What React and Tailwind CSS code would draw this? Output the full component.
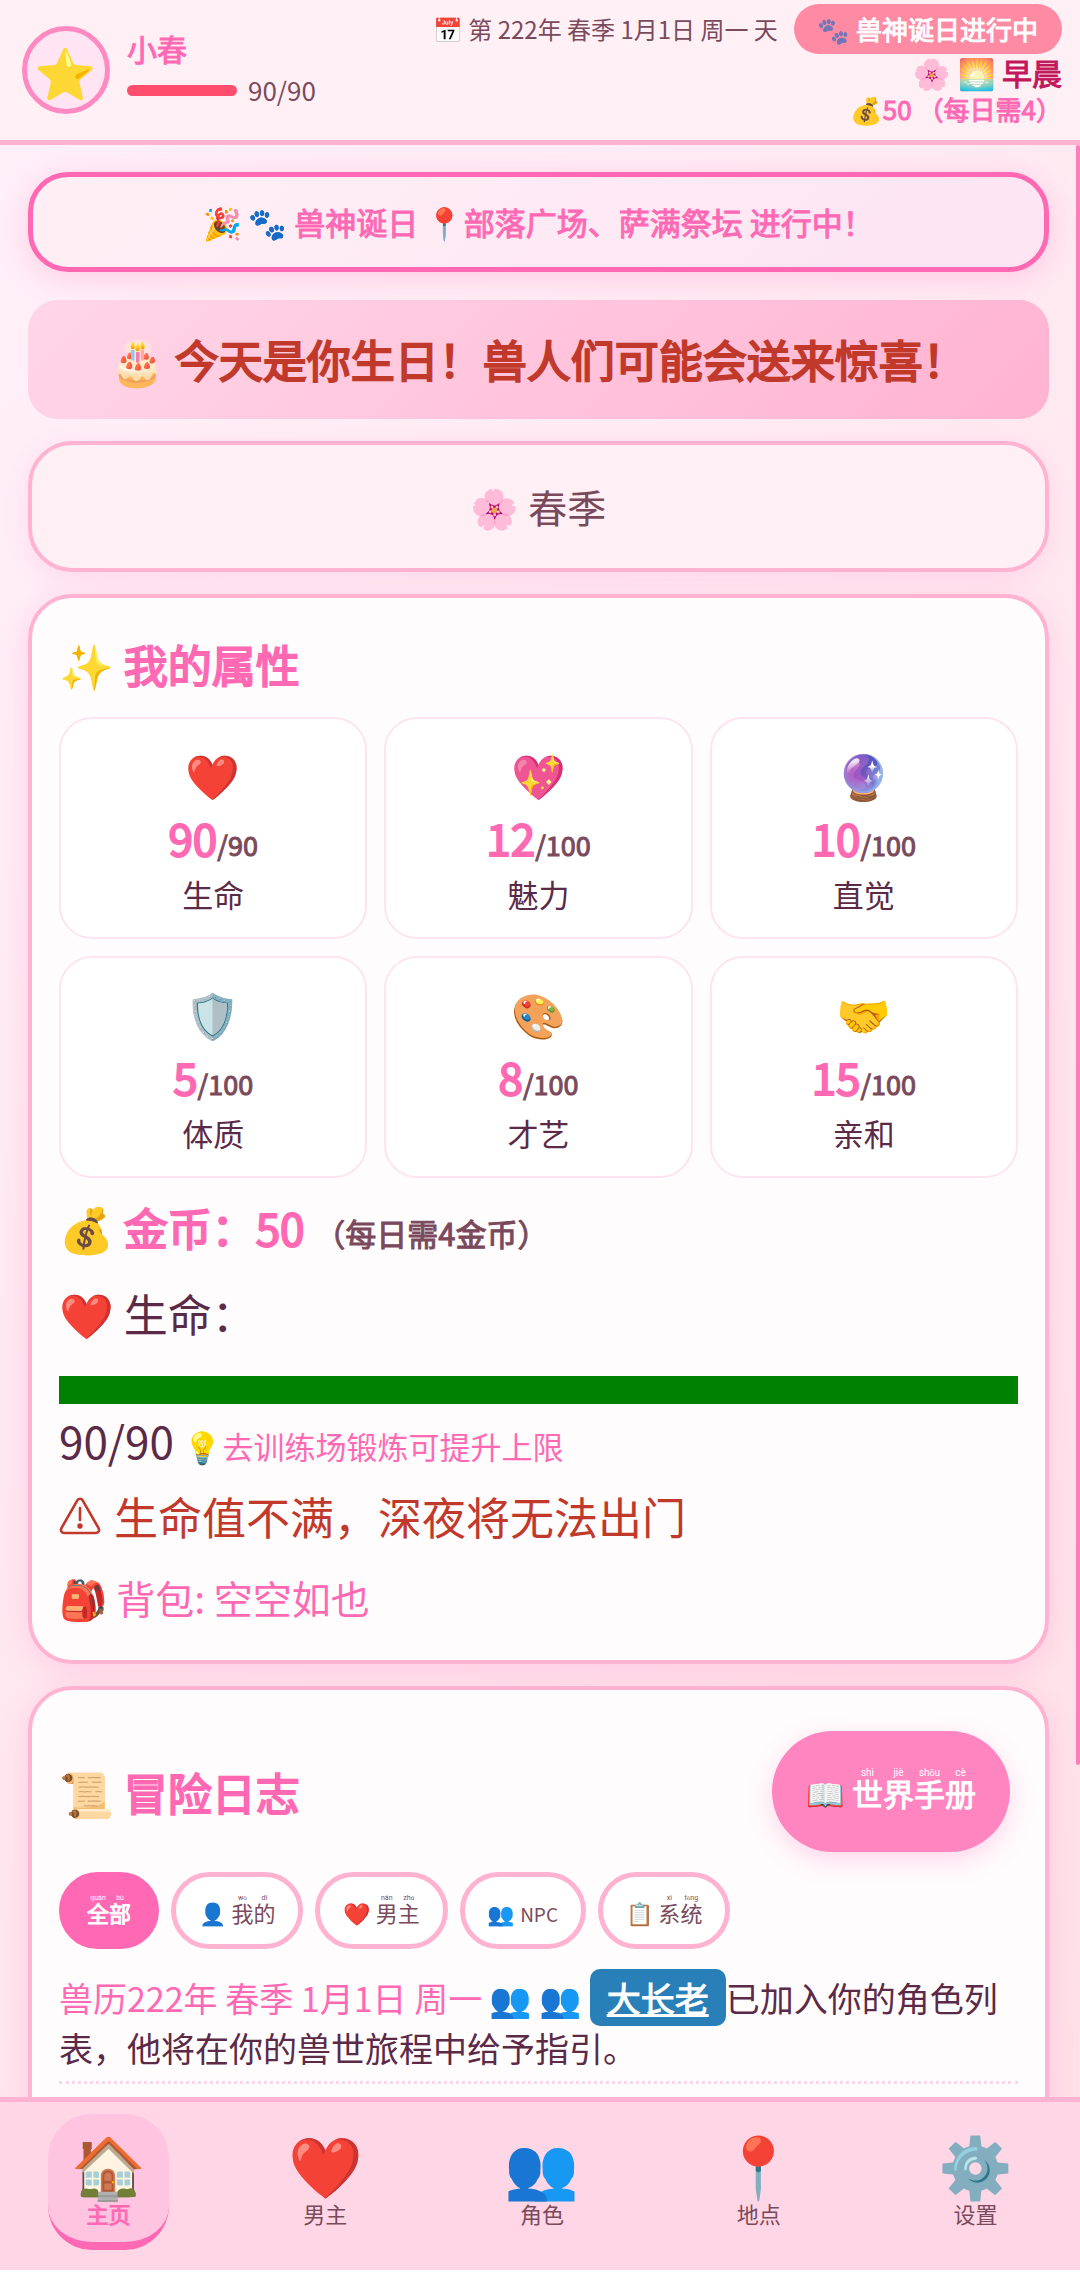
import { Fragment } from 'react';

const stats = [
  { icon: '❤️', value: 90, max: 90, label: '生命' },
  { icon: '💖', value: 12, max: 100, label: '魅力' },
  { icon: '🔮', value: 10, max: 100, label: '直觉' },
  { icon: '🛡️', value: 5, max: 100, label: '体质' },
  { icon: '🎨', value: 8, max: 100, label: '才艺' },
  { icon: '🤝', value: 15, max: 100, label: '亲和' },
];

const filters = [
  { chars: [['全', 'quán'], ['部', 'bù']], active: true },
  { icon: '👤', chars: [['我', 'wǒ'], ['的', 'dí']] },
  { icon: '❤️', chars: [['男', 'nán'], ['主', 'zhǔ']] },
  { icon: '👥', text: 'NPC' },
  { icon: '📋', chars: [['系', 'xì'], ['统', 'tǒng']] },
];

const tabs = [
  { icon: '🏠', label: '主页', active: true },
  { icon: '❤️', label: '男主' },
  { icon: '👥', label: '角色' },
  { icon: '📍', label: '地点' },
  { icon: '⚙️', label: '设置' },
];

// Characters with their pinyin set above them.
function Pinyin({ chars, small }) {
  return (
    <ruby>
      {chars.map(([c, p]) => (
        <Fragment key={c}>
          {c}
          <rt
            className={
              small
                ? "font-['Roboto'] text-[7px] leading-none [-webkit-text-stroke:0]"
                : "font-['Roboto'] text-[10px] leading-none [-webkit-text-stroke:0]"
            }
          >
            {p}
          </rt>
        </Fragment>
      ))}
    </ruby>
  );
}

function Header() {
  return (
    <header className="flex shrink-0 items-start justify-between border-b-[5px] border-[#ffb3d1] bg-[#fff0f5] px-[18px] pt-1 pb-3 pl-[22px]">
      <div className="flex items-center gap-[17px] pt-[22px]">
        <div className="flex size-[88px] items-center justify-center rounded-full border-[5px] border-[#ff8ac2] bg-[#ffe4f3] text-[50px] leading-none">⭐</div>
        <div className="flex flex-col pb-1">
          <span className="text-[30px] leading-[44px] text-[#ff69b4] [-webkit-text-stroke:1px]">小春</span>
          <div className="flex items-center gap-[11px]">
            <div className="h-[11px] w-[110px] rounded-full bg-[#ff4d6d]" />
            <span className="text-[26px] leading-[40px] text-[#7a4a5c]">90/90</span>
          </div>
        </div>
      </div>
      <div className="flex flex-col items-end whitespace-nowrap">
        <div className="flex items-center gap-4">
          <span className="text-[24px] text-[#7a4a5c]">📅 第 222年 春季 1月1日 周一 天</span>
          <span className="rounded-[25px] bg-[#ff8aa3] px-6 text-[26px] leading-[50px] text-white [-webkit-text-stroke:1px]"><span className="opacity-60">🐾</span> 兽神诞日进行中</span>
        </div>
        <span className="text-[30px] leading-[36px] text-[#c2185b] [-webkit-text-stroke:1px]">🌸 🌅 早晨</span>
        <span className="text-[26px] leading-[38px] text-[#ff69b4] [-webkit-text-stroke:1px]">💰50 （每日需4）</span>
      </div>
    </header>
  );
}

export default function App() {
  return (
    <div className="flex h-screen flex-col overflow-hidden bg-white pb-[10px] font-['Noto_Sans_CJK_SC','Noto_Color_Emoji',sans-serif] text-[#5a2a47]">
      <Header />
      <div className="relative min-h-0 flex-1">
        <main className="flex h-full flex-col overflow-y-auto bg-linear-135 from-[#fff0f8] via-[#ffe8f0] to-[#ffe0e8] py-[27px] pr-[31px] pl-7 [scrollbar-width:none]">
          <section className="mb-7 shrink-0 rounded-[40px] border-[5px] border-[#ff69b4] bg-linear-135 from-[#fff0f5] to-[#fde4f3] py-[22px] text-center text-[31px] leading-[46px] text-[#ff69b4] shadow-[0_6px_30px_rgba(255,105,180,0.25)] [-webkit-text-stroke:1px]">
            🎉 🐾 兽神诞日 📍部落广场、萨满祭坛 进行中！
          </section>
          <section className="mb-[22px] shrink-0 rounded-[30px] bg-linear-135 from-[#ffd6e7] to-[#ffb3d1] py-7 text-center text-[44px] leading-[63px] text-[#c0392b] [-webkit-text-stroke:2px]">
            🎂 今天是你生日！兽人们可能会送来惊喜！
          </section>
          <section className="mb-[22px] shrink-0 rounded-[44px] border-4 border-[#ffb3d1] bg-[#fff0f5] py-8 text-center text-[39px] leading-[59px] text-[#7a4a5c] shadow-[0_6px_24px_rgba(255,105,180,0.15)]">
            🌸 春季
          </section>

          <section className="mb-[22px] shrink-0 rounded-[44px] border-4 border-[#ffb3d1] bg-[#fffcfd] px-[27px] pt-[33px] pb-[33px] text-[44px] shadow-[0_6px_30px_rgba(255,105,180,0.2)]">
            <h2 className="mb-[20px] leading-[66px] text-[#ff69b4] [-webkit-text-stroke:2px]">✨ 我的属性</h2>
            <div className="grid grid-cols-3 gap-[17px]">
              {stats.map((s) => (
                <div key={s.label} className="flex flex-col items-center rounded-[33px] border-2 border-[#fde4f0] bg-white pt-[22px] pb-5">
                  <span className="leading-[66px]">{s.icon}</span>
                  <span className="leading-[60px] text-[#ff69b4] [-webkit-text-stroke:2px]">{s.value}<span className="text-[27px] leading-none text-[#7a4a5c] [-webkit-text-stroke:1px]">/{s.max}</span></span>
                  <span className="mt-1 text-[31px] leading-[46px]">{s.label}</span>
                </div>
              ))}
            </div>
            <p className="mt-4 leading-[66px] text-[#ff69b4] [-webkit-text-stroke:2px]">💰 金币：50 <span className="text-[31px] leading-none text-[#7a4a5c] [-webkit-text-stroke:1px]">（每日需4金币）</span></p>
            <div className="mt-[20px] leading-[66px]">❤️ 生命：</div>
            <div className="mt-[30px] h-7 bg-[#008000]" />
            <p className="mt-[3px] leading-[66px]">90/90 <span className="text-[31px] leading-none text-[#ff69b4]">💡去训练场锻炼可提升上限</span></p>
            <p className="mt-[10px] flex items-center gap-[13px] leading-[66px] text-[#c0392b]">
              <svg className="h-[38px] w-[42px]" viewBox="0 0 42 38" fill="none" stroke="currentColor" strokeWidth="2.6" strokeLinejoin="round" strokeLinecap="round" role="img" aria-label="警告">
                <path d="M18.2 3.6 2.4 31.2C1.2 33.8 2.6 36 5.4 36h31.2c2.8 0 4.2-2.2 3-4.8L23.8 3.6c-1.4-2.4-4.2-2.4-5.6 0Z" />
                <path d="M21 11v12" />
                <circle cx="21" cy="29" r="1.4" fill="currentColor" />
              </svg>
              生命值不满，深夜将无法出门
            </p>
            <p className="mt-[18px] text-[39px] leading-[60px] text-[#ff69b4]">🎒 背包: 空空如也</p>
          </section>

          <section className="shrink-0 rounded-[44px] border-4 border-[#ffb3d1] bg-[#fffcfd] px-[27px] pt-[41px] pb-24 shadow-[0_6px_30px_rgba(255,105,180,0.2)]">
            <div className="flex items-center justify-between pr-2">
              <h2 className="text-[44px] leading-[66px] text-[#ff69b4] [-webkit-text-stroke:2px]">📜 冒险日志</h2>
              <button className="h-[121px] rounded-full bg-[#ff85c0] px-[34px] pt-1 text-[31px] text-white shadow-[0_8px_24px_rgba(255,105,180,0.25)] [-webkit-text-stroke:1px]">
                📖 <Pinyin chars={[['世', 'shì'], ['界', 'jiè'], ['手', 'shǒu'], ['册', 'cè']]} />
              </button>
            </div>
            <div className="mt-[20px] flex gap-3">
              {filters.map((f, i) => (
                <button
                  key={i}
                  className={
                    f.active
                      ? 'h-[77px] rounded-full border-[5px] border-[#ff69b4] bg-[#ff69b4] px-[23px] pt-1 text-[22px] text-white [-webkit-text-stroke:1px]'
                      : 'h-[77px] rounded-full border-[5px] border-[#ffb3d1] bg-white px-[23px] pt-1 text-[22px] text-[#7a4a5c]'
                  }
                >
                  {f.icon && <>{f.icon} </>}
                  {f.text ? <span className="text-[19px] leading-none">{f.text}</span> : <Pinyin chars={f.chars} small />}
                </button>
              ))}
            </div>
            <p className="mt-6 border-b-[3px] border-dotted border-[#fbd5e8] pb-2 text-[34px] leading-[50px]">
              <span className="text-[#ff69b4]">兽历222年 春季 1月1日 周一</span> 👥 👥{' '}
              <a href="#elder" className="rounded-[10px] bg-[#2980b9] px-[17px] py-1 text-white underline decoration-[3px] underline-offset-2 [-webkit-text-stroke:1px]">大长老</a>
              已加入你的角色列表，他将在你的兽世旅程中给予指引。
            </p>
          </section>
        </main>
        <div className="absolute top-0 right-0 h-[83%] w-1 rounded-full bg-[#ff7dbb]" />
      </div>

      <nav className="flex h-[173px] shrink-0 justify-between border-t-[5px] border-[#ffb3d1] bg-[#ffd6e5] pt-3 pr-11 pl-12">
        {tabs.map((t) => (
          <button
            key={t.label}
            className={
              t.active
                ? 'flex h-[136px] w-[121px] flex-col items-center rounded-[44px] border-b-8 border-[#ff69b4] bg-[#ffc4e0] pt-4 text-[#ff69b4] [-webkit-text-stroke:1px]'
                : 'flex h-[136px] w-[121px] flex-col items-center pt-4 text-[#7a4a5c]'
            }
          >
            <span className="text-[60px] leading-[66px]">{t.icon}</span>
            <span className="text-[22px] leading-[34px]">{t.label}</span>
          </button>
        ))}
      </nav>
    </div>
  );
}
